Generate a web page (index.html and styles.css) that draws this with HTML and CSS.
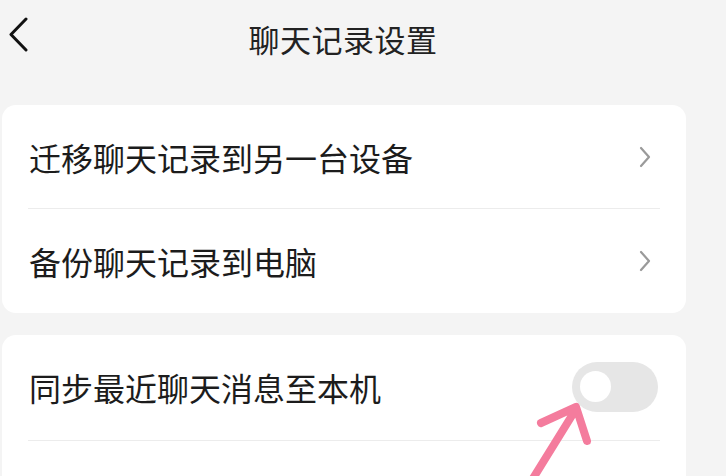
FILE: index.html
```html
<!DOCTYPE html>
<html lang="zh-CN">
<head>
    <meta charset="UTF-8">
    <meta name="viewport" content="width=device-width, initial-scale=1.0">
    <title>聊天记录设置</title>
    <link rel="stylesheet" href="styles.css">
</head>
<body>
    <div class="screen">
        <header class="topbar">
            <a class="back" href="#">
                <svg width="22" height="36" viewBox="0 0 22 36">
                    <path d="M18 2 L3 17.5 L18 33" fill="none" stroke="#111" stroke-width="3" stroke-linecap="round" stroke-linejoin="round"/>
                </svg>
            </a>
            <h1 class="title">聊天记录设置</h1>
            <span></span>
        </header>

        <section class="card">
            <div class="row">
                <span class="label">迁移聊天记录到另一台设备</span>
                <svg class="chevron" width="14" height="22" viewBox="0 0 14 22">
                    <path d="M3 2 L11 11 L3 20" fill="none" stroke="#9a9a9a" stroke-width="2.2" stroke-linecap="round" stroke-linejoin="round"/>
                </svg>
            </div>
            <div class="row">
                <span class="label">备份聊天记录到电脑</span>
                <svg class="chevron" width="14" height="22" viewBox="0 0 14 22">
                    <path d="M3 2 L11 11 L3 20" fill="none" stroke="#9a9a9a" stroke-width="2.2" stroke-linecap="round" stroke-linejoin="round"/>
                </svg>
            </div>
        </section>

        <section class="card">
            <div class="row row-tall">
                <span class="label">同步最近聊天消息至本机</span>
                <span class="switch"><span class="knob"></span></span>
            </div>
            <div class="row"></div>
        </section>
    </div>

    <!-- flecha de anotación encima de la captura -->
    <svg class="pointer" width="726" height="476" viewBox="0 0 726 476">
        <path d="M532 480 L576 409 M541 423 L576 407 L587 441" fill="none" stroke="#f47c9d" stroke-width="8" stroke-linecap="round" stroke-linejoin="round"/>
    </svg>
</body>
</html>
```

FILE: styles.css
```css
body {
    margin: 0;
    background-color: #f4f4f4;
    font-family: "Noto Sans CJK SC", "Noto Sans", sans-serif;
    color: #1c1c1c;
    width: 726px;
    height: 476px;
    overflow: hidden;
    position: relative;
}

.screen {
    width: 686px;
}

.topbar {
    height: 76px;
    display: grid;
    grid-template-columns: 1fr auto 1fr;
    align-items: center;
}

.back {
    display: flex;
    align-self: start;
    padding: 17px 0 0 8px;
}

.title {
    margin: 0;
    font-size: 31px;
    font-weight: 400;
    letter-spacing: 0.5px;
    color: #222;
}

.card {
    background-color: #fff;
    border-radius: 14px;
    margin: 29px 0 0 2px;
    padding: 0 26px;
}

.card + .card {
    margin-top: 22px;
}

.row {
    height: 104px;
    display: flex;
    align-items: center;
    justify-content: space-between;
    border-bottom: 1px solid #ececec;
    box-sizing: border-box;
}

.row-tall {
    height: 106px;
    padding-bottom: 2px;
}

.row:last-child {
    border-bottom: none;
}

.label {
    font-size: 32px;
    padding-left: 1px;
}

.chevron {
    margin-right: 8px;
}

.switch {
    width: 86px;
    height: 50px;
    border-radius: 25px;
    background-color: #e6e6e6;
    margin-right: 2px;
    display: flex;
    align-items: center;
    padding-left: 8px;
    box-sizing: border-box;
}

.knob {
    width: 31px;
    height: 31px;
    border-radius: 50%;
    background-color: #fff;
}

.pointer {
    position: absolute;
    top: 0;
    left: 0;
    pointer-events: none;
}
```
